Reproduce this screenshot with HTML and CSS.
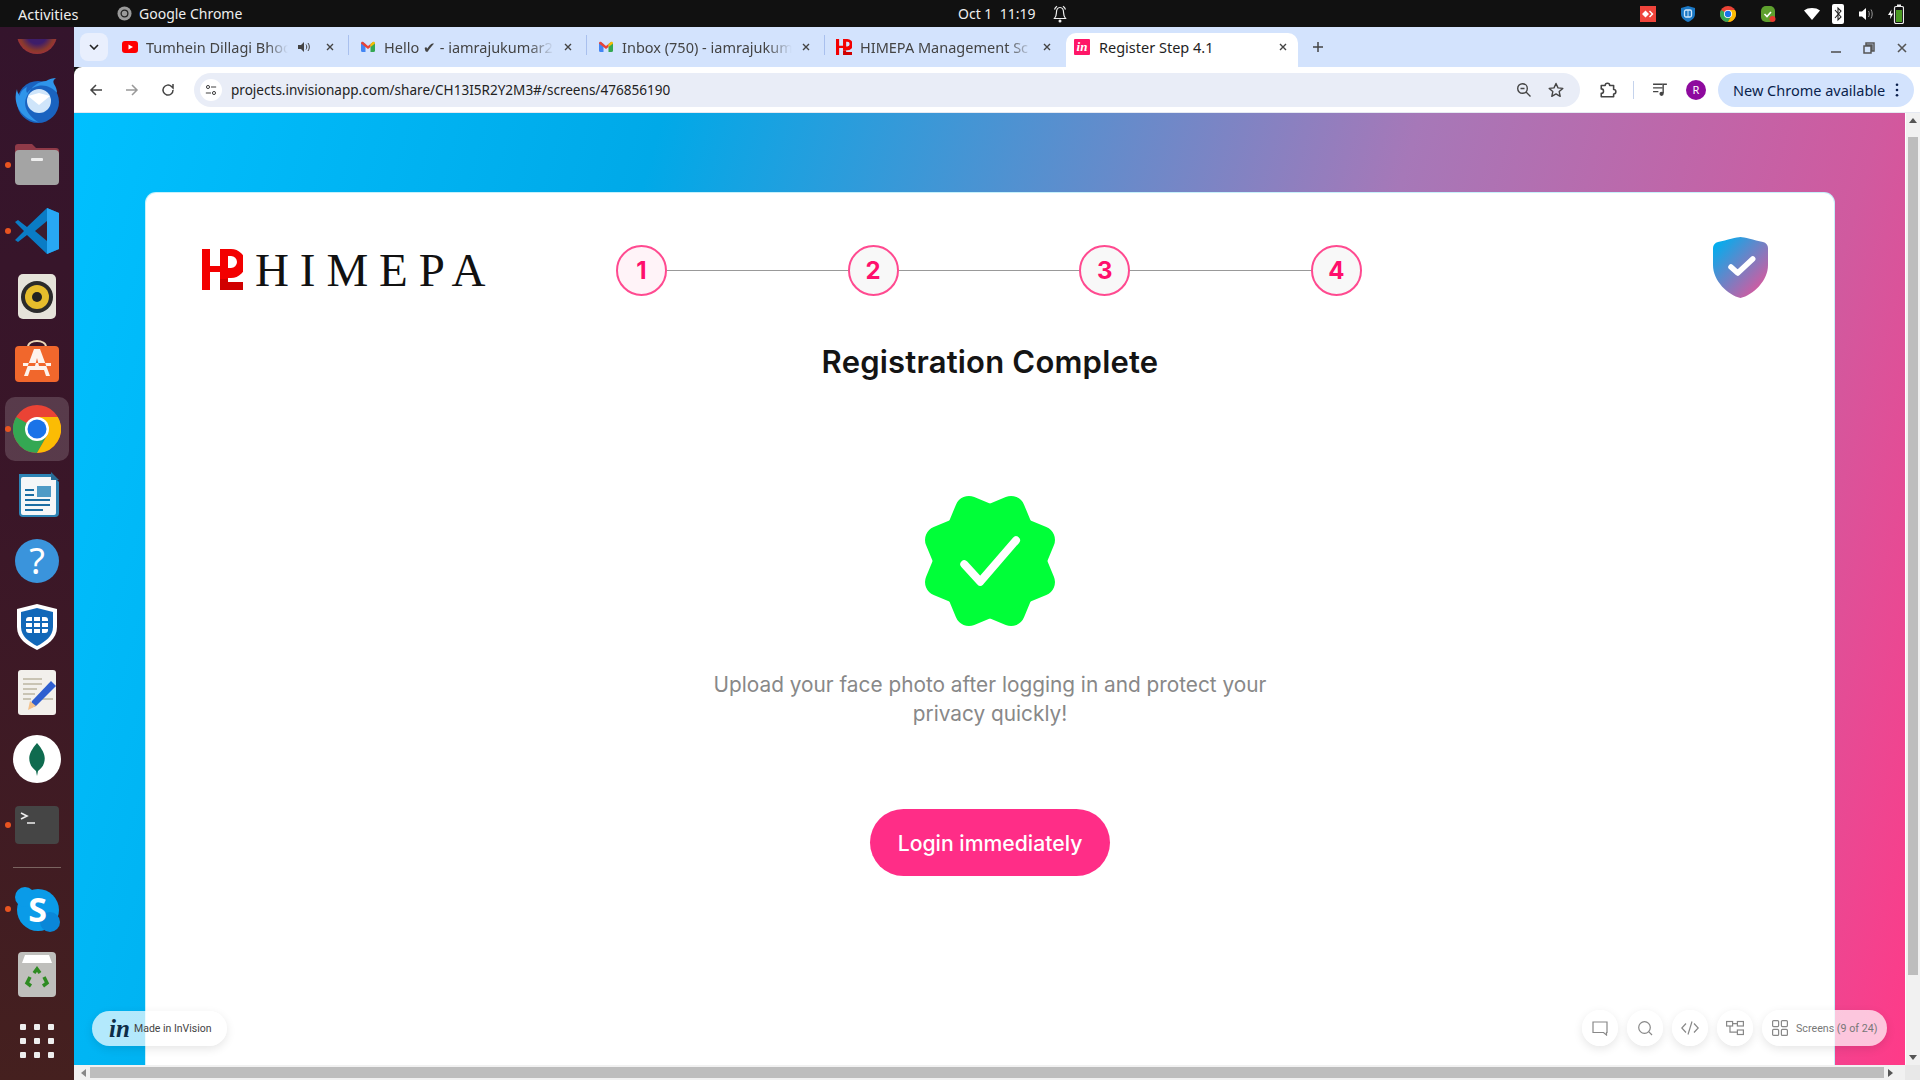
FILE: index.html
```html
<!DOCTYPE html>
<html lang="en">
<head>
<meta charset="utf-8">
<title>Register Step 4.1</title>
<link rel="stylesheet" href="styles.css">
</head>
<body>
<header class="topbar">
  <span class="activities">Activities</span>
  <span class="app-name">
    <svg class="app-icon" viewBox="0 0 16 16"><circle cx="8" cy="8" r="7.5" fill="#9a9a9a"/><circle cx="8" cy="8" r="3.6" fill="none" stroke="#222" stroke-width="1.4"/></svg>
    Google Chrome
  </span>
  <span class="clock">Oct 1&nbsp; 11:19</span>
  <svg class="bell" viewBox="0 0 16 18"><path d="M8 2.5c-3 0-3.6 2.5-3.6 5.5 0 2.6-1 4.200-2 5.500h11.200c-1-1.300-2-2.900-2-5.500 0-3-.6-5.500-3.600-5.500zM2.500 4.500C3 3 3.800 2 5 1.200M13.500 4.500C13 3 12.200 2 11 1.200" fill="none" stroke="#eee" stroke-width="1.200"/><circle cx="8" cy="16" r="1.500" fill="#eee"/></svg>
  <div class="tray">
    <svg class="tray-icon tray-any" viewBox="0 0 16 16"><rect width="16" height="16" fill="#ef443b"/><path d="M5.500 4.500 9 8l-3.500 3.500L2 8zM10 4.500 13.500 8 10 11.500 9 10.500 11.500 8 9 5.500z" fill="#fff"/></svg>
    <svg class="tray-icon tray-shield" viewBox="0 0 16 16"><path d="M8 0 15 2v6c0 4-3.500 6.500-7 8-3.500-1.500-7-4-7-8V2z" fill="#1b78c4"/><rect x="4.500" y="4" width="7" height="7" rx="1.500" fill="none" stroke="#cfe6fb" stroke-width="1.300"/><path d="M8 4v7" stroke="#cfe6fb"/></svg>
    <svg class="tray-icon tray-chrome" viewBox="0 0 48 48"><use href="#chrome-mark"/></svg>
    <svg class="tray-icon tray-green" viewBox="0 0 16 16"><rect x="1" y="0" width="14" height="16" rx="5" fill="#5ea02e"/><path d="M4.500 8 7 10.500 11 6" fill="none" stroke="#fff" stroke-width="1.600"/><circle cx="12.500" cy="13" r="3" fill="#e8392f"/></svg>
    <svg class="tray-icon tray-wifi" viewBox="0 0 16 16"><path d="M0 4.500C2 2.800 5 2 8 2s6 .8 8 2.500L8 14z" fill="#fff"/></svg>
    <svg class="tray-icon tray-bt" viewBox="0 0 12 20"><rect width="12" height="20" rx="2" fill="#fff"/><path d="M3 6l6 7-3 3V4l3 3-6 7" fill="none" stroke="#222" stroke-width="1.100"/></svg>
    <svg class="tray-icon tray-vol" viewBox="0 0 16 16"><path d="M1 5.500h3L8 2v12l-4-3.500H1z" fill="#fff"/><path d="M10.500 5c1 1.800 1 4.200 0 6M13 3.500c1.600 2.700 1.600 6.300 0 9" fill="none" stroke="#999"/></svg>
    <svg class="tray-icon tray-bat" viewBox="0 0 16 20"><path d="M3.500 5.500 0 11h2.500L2 15l3.200-5.500H2.800z" fill="#fff"/><rect x="6.500" y="2.500" width="9" height="17" rx="1.500" fill="none" stroke="#eee" stroke-width="1.200"/><rect x="9" y="0.500" width="4" height="2" fill="#eee"/><rect x="8" y="6" width="6" height="12" fill="#4a9a22"/></svg>
  </div>
</header>

<svg class="defs" aria-hidden="true"><defs>
  <g id="chrome-mark">
    <circle cx="24" cy="24" r="24" fill="#ea4335"/>
    <path d="M24 24 3.200 12A24 24 0 0 0 24 48l10.400-18z" fill="#34a853"/>
    <path d="M24 12h20.800A24 24 0 0 1 24 48l10.400-18z" fill="#fbbc04"/>
    <circle cx="24" cy="24" r="12" fill="#fff"/>
    <circle cx="24" cy="24" r="9.500" fill="#1a73e8"/>
  </g>
  <g id="gmail-mark">
    <path d="M1 13V4l2 -1 2.500 2V13H2.500A1.500 1.500 0 0 1 1 11.500z" fill="#4285f4"/>
    <path d="M10.500 13V5l2.500-2 2 1v7.500A1.500 1.500 0 0 1 13.500 13z" fill="#34a853"/>
    <path d="M1 4.500 8 10l2.500-2V5L8 7 3.500 3.200C2.300 2.300 1 3 1 4.500z" fill="#ea4335"/>
    <path d="M10.500 8 15 4.500C15 3 13.700 2.300 12.500 3.200L10.500 5z" fill="#fbbc04"/>
  </g>
  <g id="himepa-mark">
    <path d="M0 0h8v17h10V0h11a14.500 14.500 0 0 1 0 29h-3v1h-8v-7H8v18H0zM26 7v12h3a6 6 0 0 0 0-12z" fill="#f30000" fill-rule="evenodd"/>
    <path d="M18 30h8v3h15v8H18z" fill="#d00000"/>
  </g>
  <path id="close-x" d="M1 1l6 6M7 1 1 7" fill="none" stroke="#444" stroke-width="1.400"/>
</defs></svg>

<div class="desktop">
  <nav class="dock">
    <div class="dock-clip"><span class="ff-ball"></span></div>
    <div class="dock-slot">
      <svg class="dock-icon" viewBox="0 0 48 48"><circle cx="25" cy="27" r="21" fill="#1a63c0"/><path d="M4 14C-1 28 8 44 25 47 14 40 9 30 14 21 18 11 27 6 33 6c3-2 7-3 10-3-3 2-3 4-2 6 2 3 3 6 3 9C38 10 24 6 14 18c-1-2-1-4 0-6-4 2-7 5-7 9-2-2-3-5-3-7z" fill="#2f95ea"/><circle cx="26" cy="26" r="12" fill="#cfe5fa"/><path d="M15 21l11 9 11-9-11-3z" fill="#fff"/></svg>
    </div>
    <div class="dock-slot running">
      <svg class="dock-icon" viewBox="0 0 48 48"><path d="M2 6a3 3 0 0 1 3-3h14l4 4h20a3 3 0 0 1 3 3v10H2z" fill="#8f3a48"/><rect x="2" y="9" width="44" height="35" rx="4" fill="#a4a4a4"/><rect x="18" y="17" width="12" height="3" rx="1" fill="#eee"/></svg>
    </div>
    <div class="dock-slot running">
      <svg class="dock-icon" viewBox="0 0 48 48"><path d="M34 1 46 6v36l-12 5-20-19-9 7-3-2 9-9-9-9 3-2 9 7z" fill="#0a7cc5"/><path d="M34 1 46 6v36l-12 5z" fill="#28a7f3"/><path d="M34 14v20l-12-10z" fill="#3b1d2e"/></svg>
    </div>
    <div class="dock-slot">
      <svg class="dock-icon" viewBox="0 0 48 48"><rect x="5" y="1" width="38" height="45" rx="5" fill="#e6e3da"/><circle cx="24" cy="24" r="16" fill="#2b2b2b"/><circle cx="24" cy="24" r="12" fill="#e6bd2c"/><circle cx="24" cy="24" r="5" fill="#222"/></svg>
    </div>
    <div class="dock-slot">
      <svg class="dock-icon" viewBox="0 0 48 48"><path d="M15 8c0-8 18-8 18 0" fill="none" stroke="#ecd8b8" stroke-width="2"/><rect x="2" y="7" width="44" height="36" rx="4" fill="#f1672c"/><path d="M21 10h6l10 27h-4l-2-6H17l-2 6h-4zM22 27h4l-2-8zM10 24h28v3H10z" fill="#fdf3ec" fill-rule="evenodd"/></svg>
    </div>
    <div class="dock-slot running active">
      <svg class="dock-icon" viewBox="0 0 48 48"><use href="#chrome-mark"/></svg>
    </div>
    <div class="dock-slot">
      <svg class="dock-icon" viewBox="0 0 48 48"><path d="M6 3h32l8 8v31a4 4 0 0 1-4 4H10a4 4 0 0 1-4-4z" fill="#2d84b5"/><rect x="8" y="6" width="35" height="38" rx="2" fill="#f5f7f8"/><path d="M38 1l8 8h-8z" fill="#2a6d96"/><path d="M12 18h9v2h-9zM12 23h9v2h-9zM12 28h25v2H12zM12 33h25v2H12zM12 38h18v2H12z" fill="#1b6ea3"/><rect x="24" y="15" width="14" height="11" fill="#4f9bc6"/></svg>
    </div>
    <div class="dock-slot">
      <svg class="dock-icon" viewBox="0 0 48 48"><circle cx="24" cy="24" r="22" fill="#3a94dc"/><text class="help-mark" x="24" y="37" text-anchor="middle">?</text></svg>
    </div>
    <div class="dock-slot">
      <svg class="dock-icon" viewBox="0 0 48 48"><path d="M24 1 44 6v18c0 12-10 18-20 23C14 42 4 36 4 24V6z" fill="#fff"/><path d="M24 5 40 9v15c0 9-8 15-16 19C16 39 8 33 8 24V9z" fill="#1268b8"/><rect x="13" y="14" width="22" height="16" rx="3" fill="#fff"/><path d="M13 19h22M13 25h22M20 14v16M28 14v16" stroke="#1268b8" stroke-width="2"/></svg>
    </div>
    <div class="dock-slot">
      <svg class="dock-icon" viewBox="0 0 48 48"><rect x="5" y="1" width="38" height="45" rx="3" fill="#f2f0ec"/><path d="M10 10h19M10 15h19M10 20h14M10 25h12M10 30h8M26 30h14" stroke="#c9c4b4" stroke-width="2"/><path d="M38 12l5 5-20 20-6 2 2-7z" fill="#2f5fd0"/><path d="M17 32l6 5-8 4z" fill="#f3c089"/></svg>
    </div>
    <div class="dock-slot">
      <svg class="dock-icon" viewBox="0 0 48 48"><circle cx="24" cy="24" r="24" fill="#fff"/><path d="M24 8c7 8 9 14 7 20-1 4-4 6-6 8l-1 5-1-5c-2-2-5-4-6-8-2-6 0-12 7-20z" fill="#0f6b4f"/></svg>
    </div>
    <div class="dock-slot running">
      <svg class="dock-icon" viewBox="0 0 48 48"><rect x="2" y="5" width="44" height="38" rx="4" fill="#454545"/><path d="M8 12l6 3-6 3M14 22h8" fill="none" stroke="#eee" stroke-width="1.600"/></svg>
    </div>
    <div class="dock-sep"></div>
    <div class="dock-slot running skype">
      <svg class="dock-icon" viewBox="0 0 48 48"><circle cx="25" cy="25" r="21" fill="#0a9be8"/><circle cx="12" cy="12" r="10" fill="#0a9be8"/><circle cx="37" cy="37" r="10" fill="#0a87d8"/><text class="skype-mark" x="24.500" y="37" text-anchor="middle">S</text></svg>
    </div>
    <div class="dock-slot">
      <svg class="dock-icon" viewBox="0 0 48 48"><rect x="5" y="1" width="38" height="45" rx="4" fill="#bfbfbc"/><path d="M9 12 12 4h24l3 8z" fill="#fff"/><g fill="none" stroke="#2e8b22" stroke-width="3.500"><path d="M21 22l3-4 3 4"/><path d="M31 26l3 6-4 3"/><path d="M18 35l-4-3 3-6"/></g></svg>
    </div>
    <div class="dock-slot">
      <div class="app-grid"><i></i><i></i><i></i><i></i><i></i><i></i><i></i><i></i><i></i></div>
    </div>
  </nav>

  <div class="chrome">
    <div class="tabstrip">
      <button class="tab-search"><svg viewBox="0 0 10 6" class="chev"><path d="M1 1l4 4 4-4" fill="none" stroke="#222" stroke-width="1.600"/></svg></button>
      <div class="tab">
        <svg class="favicon" viewBox="0 0 16 16"><rect y="2" width="16" height="12" rx="3" fill="#f00"/><path d="M6.500 5.500v5L11 8z" fill="#fff"/></svg>
        <span class="tab-title">Tumhein Dillagi Bhool</span>
        <svg class="tab-audio" viewBox="0 0 14 12"><path d="M0 4h3l3-3v10L3 8H0z" fill="#444"/><path d="M8 3.500c1 1.500 1 3.500 0 5M10 2c1.800 2.400 1.800 5.600 0 8" fill="none" stroke="#444"/></svg>
        <svg class="tab-x" viewBox="0 0 8 8"><use href="#close-x"/></svg>
      </div>
      <div class="tab">
        <svg class="favicon" viewBox="0 0 16 16"><use href="#gmail-mark"/></svg>
        <span class="tab-title">Hello ✔ - iamrajukumar2</span>
        <svg class="tab-x" viewBox="0 0 8 8"><use href="#close-x"/></svg>
      </div>
      <div class="tab">
        <svg class="favicon" viewBox="0 0 16 16"><use href="#gmail-mark"/></svg>
        <span class="tab-title">Inbox (750) - iamrajukum</span>
        <svg class="tab-x" viewBox="0 0 8 8"><use href="#close-x"/></svg>
      </div>
      <div class="tab tab-last">
        <svg class="favicon" viewBox="0 0 41 41"><use href="#himepa-mark"/></svg>
        <span class="tab-title">HIMEPA Management Sc</span>
        <svg class="tab-x" viewBox="0 0 8 8"><use href="#close-x"/></svg>
      </div>
      <div class="tab tab-active">
        <span class="favicon fav-in">in</span>
        <span class="tab-title">Register Step 4.1</span>
        <svg class="tab-x" viewBox="0 0 8 8"><use href="#close-x"/></svg>
      </div>
      <svg class="new-tab" viewBox="0 0 12 12"><path d="M6 1v10M1 6h10" stroke="#444" stroke-width="1.500"/></svg>
      <div class="win-controls">
        <svg viewBox="0 0 12 12"><path d="M1 10h10" stroke="#555" stroke-width="1.600"/></svg>
        <svg viewBox="0 0 12 12"><path d="M3 1h8v8H9V3H3z M1 4h7v7H1z" fill="none" stroke="#555" stroke-width="1.500"/></svg>
        <svg viewBox="0 0 12 12"><path d="M2 2l8 8M10 2l-8 8" stroke="#555" stroke-width="1.600"/></svg>
      </div>
    </div>

    <div class="toolbar">
      <svg class="nav-icon" viewBox="0 0 16 16"><path d="M14 8H3M8 3 3 8l5 5" fill="none" stroke="#444" stroke-width="1.500"/></svg>
      <svg class="nav-icon nav-dim" viewBox="0 0 16 16"><path d="M2 8h11M8 3l5 5-5 5" fill="none" stroke="#999" stroke-width="1.500"/></svg>
      <svg class="nav-icon" viewBox="0 0 16 16"><path d="M13 8a5 5 0 1 1-1.500-3.500L13 6V2" fill="none" stroke="#444" stroke-width="1.500"/></svg>
      <div class="omnibox">
        <span class="site-info"><svg viewBox="0 0 14 14"><circle cx="3.500" cy="3.500" r="1.800" fill="none" stroke="#333" stroke-width="1.100"/><path d="M7 3.500h6M1 10.500h6" stroke="#333" stroke-width="1.100"/><circle cx="10.500" cy="10.500" r="1.800" fill="none" stroke="#333" stroke-width="1.100"/></svg></span>
        <span class="url">projects.invisionapp.com/share/CH13I5R2Y2M3#/screens/476856190</span>
        <svg class="omni-icon omni-zoom" viewBox="0 0 16 16"><circle cx="6.500" cy="6.500" r="4.800" fill="none" stroke="#444" stroke-width="1.400"/><path d="M4.500 6.500h4M10 10l4.500 4.500" stroke="#444" stroke-width="1.400"/></svg>
        <svg class="omni-icon" viewBox="0 0 16 16"><path d="M8 1.500l2 4.400 4.800.5-3.600 3.200 1 4.700L8 11.900l-4.200 2.400 1-4.700L1.200 6.400 6 5.900z" fill="none" stroke="#444" stroke-width="1.400" stroke-linejoin="round"/></svg>
      </div>
      <svg class="tool-icon tool-ext" viewBox="0 0 16 16"><path d="M2 4h3.500a2 2 0 0 1 4 0H13v3.500a2 2 0 0 1 0 4V14H2v-3a2 2 0 0 0 0-4z" fill="none" stroke="#444" stroke-width="1.400" stroke-linejoin="round"/></svg>
      <span class="tool-sep"></span>
      <svg class="tool-icon tool-media" viewBox="0 0 16 16"><path d="M1 3h9M1 6.500h9M1 10h5" stroke="#444" stroke-width="1.300"/><path d="M10.500 11.500V3H14" fill="none" stroke="#444" stroke-width="1.300"/><circle cx="9" cy="12" r="2" fill="#444"/></svg>
      <span class="avatar">R</span>
      <div class="update-pill">
        <span>New Chrome available</span>
        <svg class="dots" viewBox="0 0 4 16"><circle cx="2" cy="2" r="1.500"/><circle cx="2" cy="8" r="1.500"/><circle cx="2" cy="14" r="1.500"/></svg>
      </div>
    </div>

    <div class="viewport">
      <div class="view-row">
        <main class="page">
          <section class="card">
            <div class="card-head">
              <div class="logo">
                <svg class="logo-mark" viewBox="0 0 41 41"><use href="#himepa-mark"/></svg>
                <span class="logo-word">HIMEPA</span>
              </div>
              <ol class="steps">
                <li class="step step-first">1</li><li class="step-line"></li>
                <li class="step">2</li><li class="step-line"></li>
                <li class="step">3</li><li class="step-line"></li>
                <li class="step">4</li>
              </ol>
              <svg class="shield" viewBox="0 0 55 61">
                <defs><linearGradient id="shield-grad" x1="0.050" y1="0.100" x2="0.850" y2="0.950"><stop offset="0" stop-color="#00aeef"/><stop offset="1" stop-color="#e0559b"/></linearGradient></defs>
                <path d="M27.500 0C31 0 41 3 50 5c3 .8 5 3 5 6v17c0 16-15 30-27.500 33C15 58 0 44 0 28V11c0-3 2-5.200 5-6C14 3 24 0 27.500 0z" fill="url(#shield-grad)"/>
                <path d="M18 30l6.700 6L39.700 22" fill="none" stroke="#fff" stroke-width="5.500" stroke-linecap="round" stroke-linejoin="round"/>
              </svg>
            </div>
            <h1 class="title">Registration Complete</h1>
            <svg class="badge" viewBox="0 0 130 130">
              <rect x="12" y="12" width="106" height="106" rx="14" fill="#00ff38" transform="rotate(22.500 65 65)"/>
              <rect x="12" y="12" width="106" height="106" rx="14" fill="#00ff38" transform="rotate(67.500 65 65)"/>
              <path d="M39.300 68.300 55.300 85.700 91 44.300" fill="none" stroke="#fff" stroke-width="8" stroke-linecap="round" stroke-linejoin="round"/>
            </svg>
            <p class="message">Upload your face photo after logging in and protect your privacy quickly!</p>
            <button class="cta">Login immediately</button>
          </section>

          <div class="made-in">
            <span class="in-logo">in</span>
            <span>Made in InVision</span>
          </div>
          <div class="proto-tools">
            <span class="tool-round"><svg viewBox="0 0 16 16"><path d="M1 2h14v10.500h-0.500v2.500l-3-2.500H1z" fill="none" stroke="#888" stroke-width="1.200"/></svg></span>
            <span class="tool-round"><svg viewBox="0 0 16 16"><circle cx="7.500" cy="7.500" r="5.800" fill="none" stroke="#888" stroke-width="1.200"/><path d="M11.700 11.700 15 15" stroke="#888" stroke-width="1.200"/></svg></span>
            <span class="tool-round"><svg viewBox="0 0 18 16"><path d="M5 3.500.8 8 5 12.500M13 3.500 17.200 8 13 12.500M11 1.500 7 14.500" fill="none" stroke="#888" stroke-width="1.200"/></svg></span>
            <span class="tool-round"><svg viewBox="0 0 18 16"><rect x=".6" y="1.500" width="6" height="4.500" fill="none" stroke="#888" stroke-width="1.200"/><rect x="11.400" y="1.500" width="6" height="4.500" fill="none" stroke="#888" stroke-width="1.200"/><rect x="11.400" y="10" width="6" height="4.500" fill="none" stroke="#888" stroke-width="1.200"/><path d="M6.600 3.700h4.800M4 6v6.200h7.400" fill="none" stroke="#888" stroke-width="1.200"/></svg></span>
            <span class="screens-pill">
              <svg viewBox="0 0 16 16"><rect x=".6" y=".6" width="6" height="6" rx="1" fill="none" stroke="#888" stroke-width="1.200"/><rect x="9.400" y=".6" width="6" height="6" rx="1" fill="none" stroke="#888" stroke-width="1.200"/><rect x=".6" y="9.400" width="6" height="6" rx="1" fill="none" stroke="#888" stroke-width="1.200"/><rect x="9.400" y="9.400" width="6" height="6" rx="1" fill="none" stroke="#888" stroke-width="1.200"/></svg>
              <span>Screens (9 of 24)</span>
            </span>
          </div>
        </main>
        <div class="vscroll">
          <i class="arrow arrow-up"></i>
          <div class="vthumb-track"><div class="vthumb"></div></div>
          <i class="arrow arrow-down"></i>
        </div>
      </div>
      <div class="hscroll">
        <i class="arrow arrow-left"></i>
        <div class="hthumb"></div>
        <i class="arrow arrow-right"></i>
        <span class="corner"></span>
      </div>
    </div>
  </div>
</div>
</body>
</html>
```
FILE: styles.css
```css
* { box-sizing: border-box; }
html, body { margin: 0; height: 100%; overflow: hidden; }
body { display: flex; flex-direction: column; width: 1920px; height: 1080px; font-family: "Noto Sans", sans-serif; background: #111; }
.defs { width: 0; height: 0; position: absolute; }

/* GNOME top bar */
.topbar { height: 27px; flex: none; display: flex; align-items: center; background: #111; color: #eee; font-size: 14px; padding-left: 18px; }
.activities { width: 99px; font-size: 14.500px; }
.app-name { display: flex; align-items: center; gap: 7px; width: 841px; }
.app-icon { width: 15px; height: 15px; }
.clock { width: 94px; font-size: 14px; }
.bell { width: 16px; height: 18px; margin-left: 0; }
.tray { display: flex; align-items: center; margin-left: auto; }
.tray-icon { height: 16px; width: 16px; flex: none; }
.tray-any { margin-right: 24px; }
.tray-shield { margin-right: 24px; }
.tray-chrome { margin-right: 24px; }
.tray-green { margin-right: 28px; }
.tray-wifi { margin-right: 12px; }
.tray-bt { width: 12px; height: 20px; margin-right: 14px; }
.tray-vol { margin-right: 14px; }
.tray-bat { height: 20px; margin-right: 16px; }

.desktop { flex: 1; min-height: 0; display: flex; }

/* Dock */
.dock { width: 74px; flex: none; display: flex; flex-direction: column; align-items: center; padding-top: 12px; background: linear-gradient(180deg, #34142c 0%, #3a1628 45%, #45201f 100%); }
.dock-clip { width: 48px; height: 15px; overflow: hidden; margin-bottom: 12px; flex: none; }
.ff-ball { display: block; width: 40px; height: 40px; margin: -25px auto 0; border-radius: 50%; background: radial-gradient(circle, #3d1d6a 0 35%, #8a3a2c 60%, #c81e5a 100%); }
.dock-slot { position: relative; width: 64px; height: 66px; flex: none; display: flex; align-items: center; justify-content: center; }
.dock-icon { width: 48px; height: 48px; }
.dock-slot.active::before { content: ""; position: absolute; inset: 1px 0; background: rgba(255,255,255,.16); border-radius: 10px; }
.dock-slot.active .dock-icon { position: relative; }
.dock-slot.running::after { content: ""; position: absolute; left: 0; top: 30px; width: 6px; height: 6px; border-radius: 50%; background: #e95420; }
.dock-sep { width: 48px; height: 1px; background: #7a6460; margin: 9px 0 8px; flex: none; }
.help-mark { font: 400 36px "Noto Sans", sans-serif; fill: #fff; }
.skype-mark { font: 700 34px "Open Sans", sans-serif; fill: #fff; }
.app-grid { display: grid; grid-template-columns: repeat(3, 6px); gap: 8px 8px; }
.app-grid i { width: 6px; height: 6px; background: #eee; border-radius: 1px; }

/* Chrome */
.chrome { flex: 1; min-width: 0; display: flex; flex-direction: column; }
.tabstrip { height: 40px; flex: none; display: flex; align-items: flex-end; background: #d3e3fd; padding-left: 6px; }
.tab-search { width: 28px; height: 28px; margin: 0 3px 6px 0; padding: 0; border: 0; background: #e9effd; border-radius: 8px; display: flex; align-items: center; justify-content: center; }
.chev { width: 10px; height: 6px; }
.tab { width: 238px; height: 34px; flex: none; display: flex; align-items: center; padding: 0 15px 6px 11px; font-size: 14.500px; color: #444; background-image: linear-gradient(#a9c0ee, #a9c0ee); background-size: 1.500px 20px; background-position: right 0 top 2px; background-repeat: no-repeat; }
.favicon { width: 16px; height: 16px; flex: none; }
.tab-title { flex: 1; min-width: 0; margin: 0 10px 0 8px; white-space: nowrap; overflow: hidden; -webkit-mask-image: linear-gradient(90deg, #000 85%, transparent); mask-image: linear-gradient(90deg, #000 85%, transparent); }
.tab-audio { width: 14px; height: 12px; flex: none; margin-right: 14px; }
.tab-x { width: 8px; height: 8px; flex: none; }
.tab-last { width: 241px; background-image: none; }
.tab-active { width: 232px; padding: 0 11px 6px 8px; background: #fff; border-radius: 10px 10px 0 0; color: #1f1f1f; }
.tab-active .tab-title { margin-left: 9px; -webkit-mask-image: none; mask-image: none; }
.fav-in { display: flex; align-items: center; justify-content: center; background: #ff1668; color: #fff; font: italic 700 13px "Liberation Serif", serif; border-radius: 1px; }
.new-tab { width: 12px; height: 12px; margin: 0 0 14px 14px; }
.win-controls { margin: 0 12px 13px auto; display: flex; gap: 21px; }
.win-controls svg { width: 12px; height: 12px; }

.toolbar { height: 46px; flex: none; display: flex; align-items: center; background: #fff; padding-left: 14px; border-bottom: 1px solid #e5e9f2; border-top-left-radius: 8px; }
.nav-icon { width: 16px; height: 16px; margin-right: 20px; flex: none; }
.nav-icon:nth-of-type(3) { margin-right: 18px; }
.omnibox { width: 1386px; height: 34px; flex: none; display: flex; align-items: center; background: #e9edf7; border-radius: 17px; padding: 0 16px 0 6px; }
.site-info { width: 22px; height: 22px; background: #fff; border-radius: 50%; display: flex; align-items: center; justify-content: center; flex: none; }
.site-info svg { width: 12px; height: 12px; }
.url { margin-left: 9px; font-size: 13.550px; color: #222; flex: 1; white-space: nowrap; }
.omni-icon { width: 16px; height: 16px; flex: none; }
.omni-zoom { margin-right: 16px; }
.tool-icon { width: 18px; height: 18px; flex: none; }
.tool-ext { margin-left: 19px; }
.tool-sep { width: 1px; height: 18px; background: #c5d3ec; margin: 0 18px 0 16px; flex: none; }
.tool-media { width: 17px; height: 17px; }
.avatar { width: 20px; height: 20px; margin-left: 17px; border-radius: 50%; background: #8e0a9e; color: #fff; font-size: 11px; display: flex; align-items: center; justify-content: center; flex: none; }
.update-pill { width: 196px; height: 34px; margin-left: 12px; flex: none; display: flex; align-items: center; justify-content: space-between; padding: 0 15px 0 15px; border-radius: 17px; background: #d3e3fd; color: #0a1f4c; font-size: 14.500px; }
.dots { width: 4px; height: 14px; fill: #0a1f4c; }

/* Viewport */
.viewport { flex: 1; min-height: 0; display: flex; flex-direction: column; background: #f1f1f1; }
.view-row { flex: 1; min-height: 0; display: flex; }
.page { position: relative; flex: 1; min-width: 0; overflow: hidden; padding: 80px 71px 0 72px; background: linear-gradient(106deg, #00c0ff 0%, #00a9e8 28%, #a678b8 64%, #d05a9f 86%, #ff3a88 100%); }

.card { height: 1100px; background: #fff; border-radius: 10px; box-shadow: 0 0 0 1px #c6f1fb; display: flex; flex-direction: column; align-items: center; }
.card-head { width: 100%; display: flex; align-items: flex-start; padding: 44px 66px 0 56px; height: 105px; }
.logo { display: flex; align-items: flex-start; width: 414px; flex: none; padding-top: 12px; }
.logo-mark { width: 41px; height: 41px; flex: none; }
.logo-word { margin-left: 12px; font: 400 47px/41px "Liberation Serif", serif; letter-spacing: 10.900px; color: #111; margin-top: 1px; white-space: nowrap; }
.steps { list-style: none; margin: 8px 0 0; padding: 0; display: flex; align-items: center; }
.step { width: 51px; height: 51px; flex: none; border-radius: 50%; border: 2px solid #ff4a90; background: #f8f8f8; color: #ff0f6c; font: 700 24px "Inter", sans-serif; display: flex; align-items: center; justify-content: center; }
.step-first { background: #fff3f8; }
.step-line { width: 180.600px; height: 1px; background: #999; flex: none; }
.shield { width: 55px; height: 61px; margin-left: auto; flex: none; }

.title { margin: 45px 0 0; font: 600 31px/38px "Inter", sans-serif; color: #141414; letter-spacing: .2px; }
.badge { width: 130px; height: 130px; margin-top: 115px; flex: none; }
.message { width: 600px; margin: 44px 0 0; text-align: center; font: 400 20.800px/29px "Inter", sans-serif; color: #888; }
.cta { width: 240px; height: 67px; margin-top: 81px; border: 0; border-radius: 34px; background: #ff2d87; color: #fff; font: 500 21.200px "Inter", sans-serif; }

.made-in { position: absolute; left: 18px; bottom: 19px; width: 135px; height: 35px; border-radius: 18px; background: rgba(255,255,255,.7); box-shadow: 0 3px 10px rgba(0,0,0,.1); display: flex; align-items: center; gap: 6px; padding-left: 17px; font: 400 10.500px "Roboto", sans-serif; color: #444; }
.in-logo { font: italic 700 25px/20px "Liberation Serif", serif; color: #0c2d48; width: 19px; }
.proto-tools { position: absolute; right: 18px; bottom: 19px; display: flex; align-items: center; gap: 9px; }
.tool-round { width: 36px; height: 36px; border-radius: 50%; background: rgba(255,255,255,.95); box-shadow: 0 3px 10px rgba(0,0,0,.1); display: flex; align-items: center; justify-content: center; }
.tool-round svg { width: 16px; height: 16px; }
.tool-round:nth-child(3) svg, .tool-round:nth-child(4) svg { width: 18px; }
.screens-pill { width: 125px; height: 36px; border-radius: 18px; background: rgba(255,255,255,.7); box-shadow: 0 3px 10px rgba(0,0,0,.1); display: flex; align-items: center; gap: 8px; padding-left: 10px; font: 400 10.700px "Roboto", sans-serif; color: #777; white-space: nowrap; }
.screens-pill svg { width: 16px; height: 16px; flex: none; }

/* Scrollbars */
.vscroll { width: 15px; flex: none; background: #f1f1f1; display: flex; flex-direction: column; align-items: center; padding: 5px 0; border-left: 1px solid #fff; }
.vthumb-track { flex: 1; width: 100%; padding: 14px 2px 80px 2px; }
.vthumb { height: 100%; background: #bdbdbd; }
.hscroll { height: 15px; flex: none; display: flex; align-items: center; padding-left: 7px; background: #f1f1f1; }
.hthumb { width: 1794px; height: 11px; margin-left: 4px; background: #bdbdbd; }
.corner { width: 15px; height: 15px; margin-left: auto; background: #e8e8e8; }
.arrow { display: block; width: 0; height: 0; border: 4px solid transparent; flex: none; }
.arrow-up { border-bottom: 5px solid #555; border-top-width: 0; }
.arrow-down { border-top: 5px solid #555; border-bottom-width: 0; }
.arrow-left { border-right: 5px solid #888; border-left-width: 0; }
.arrow-right { border-left: 5px solid #555; border-right-width: 0; margin-left: 4px; }
```
